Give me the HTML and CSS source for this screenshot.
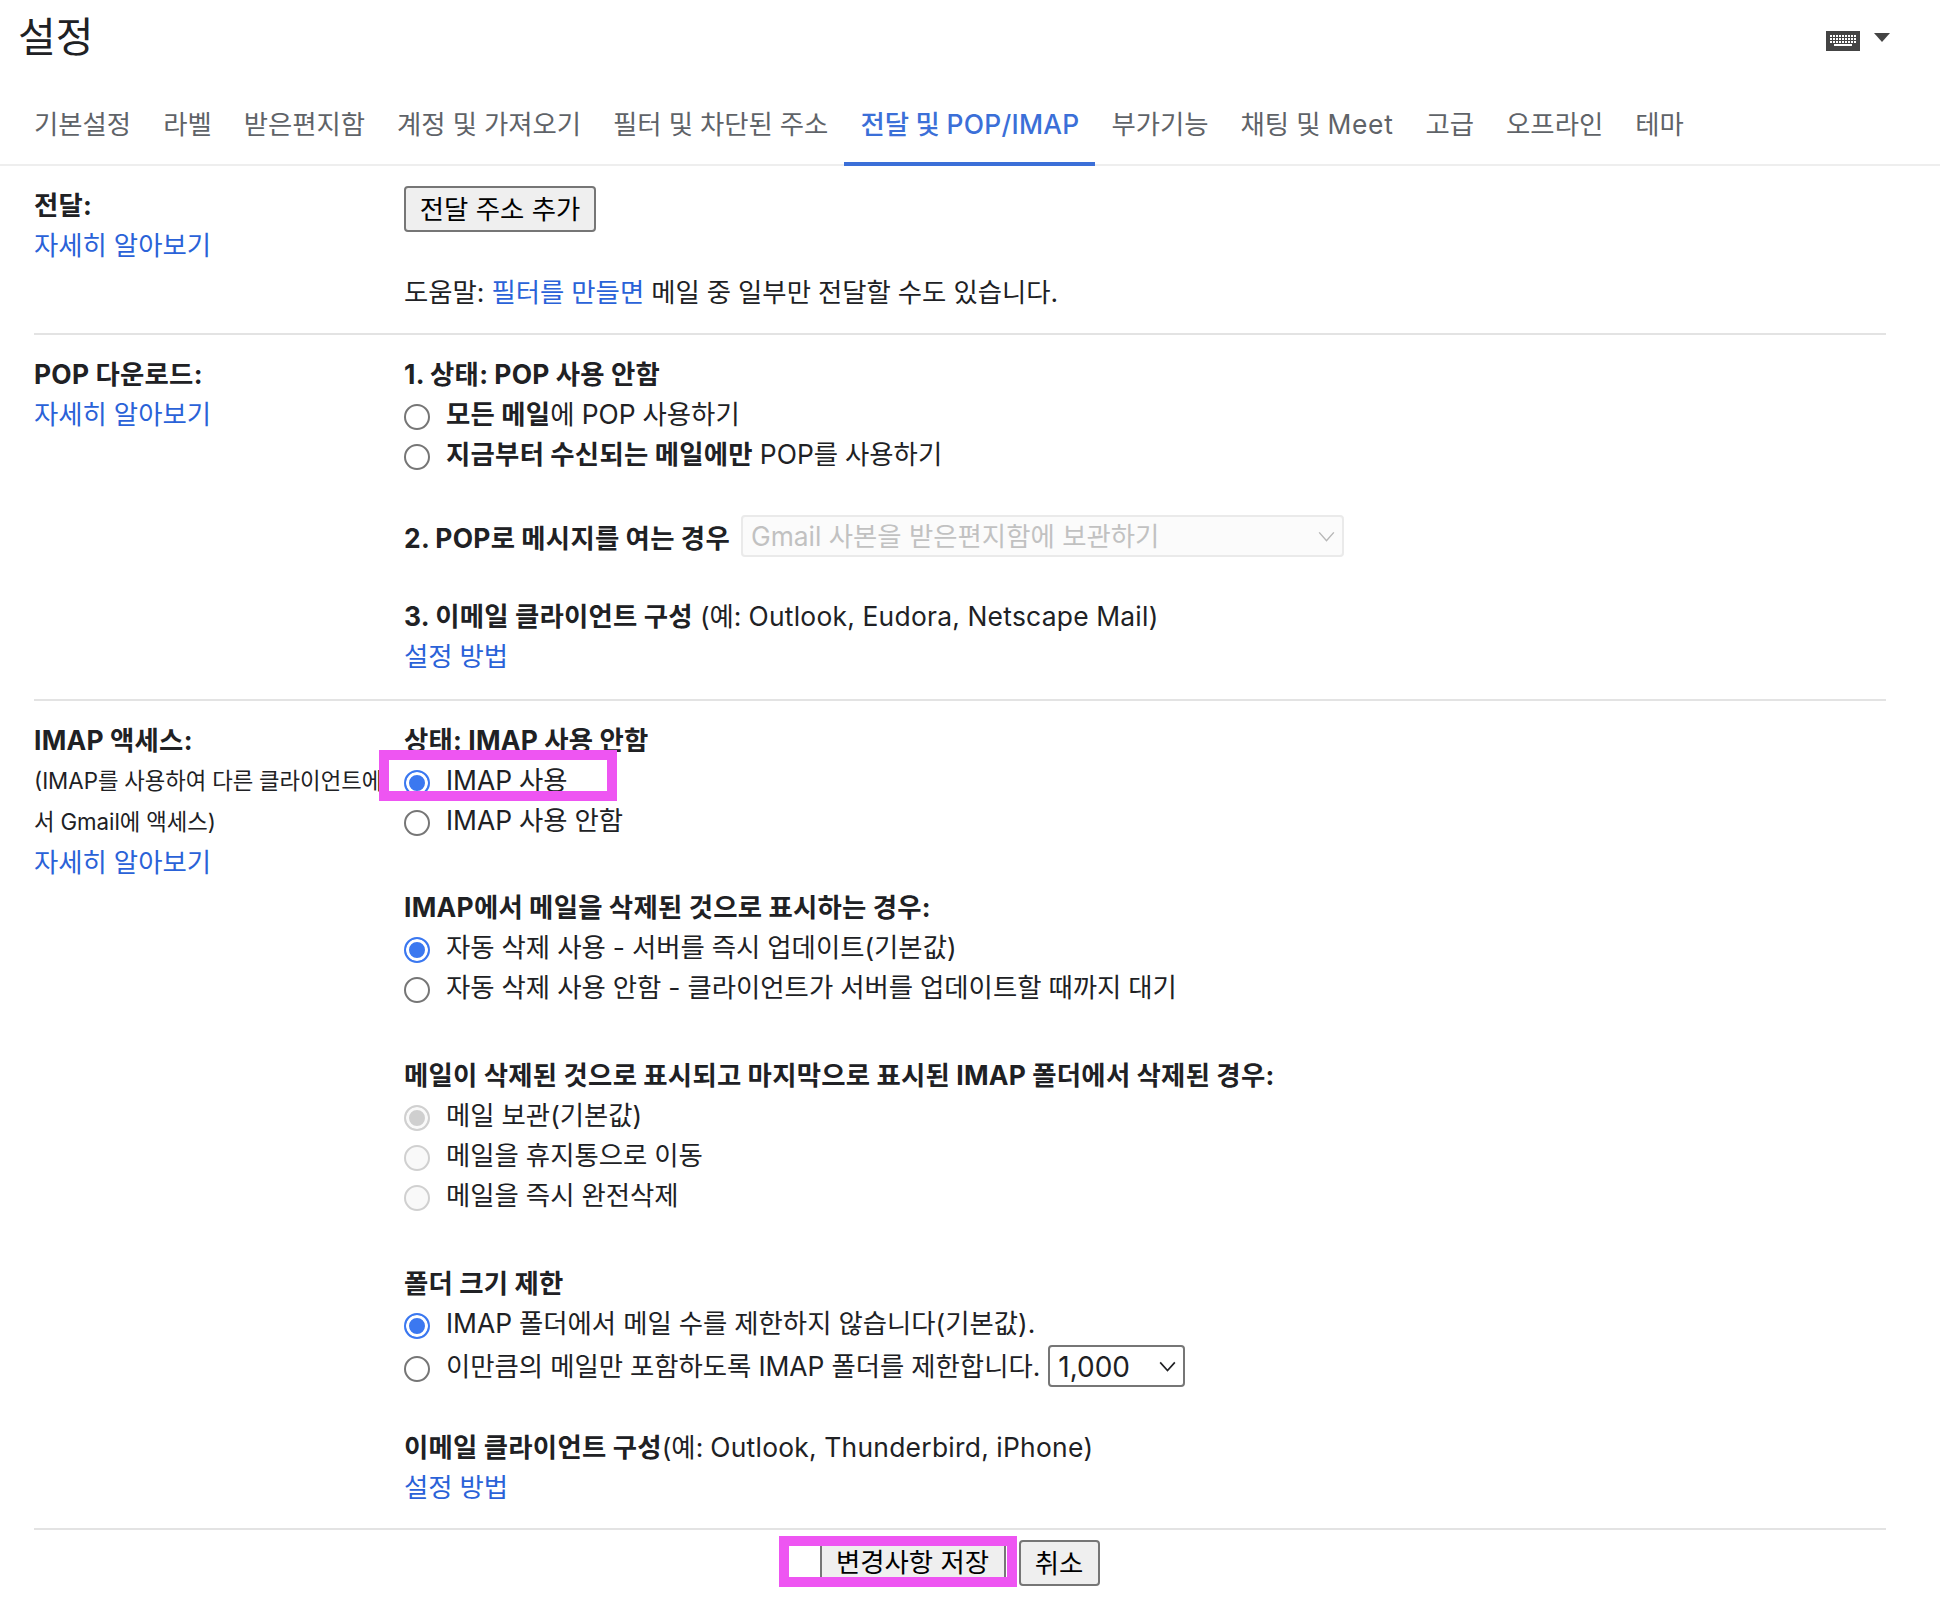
FILE: index.html
```html
<!DOCTYPE html>
<html lang="ko">
<head>
<meta charset="utf-8">
<title>설정</title>
<link rel="stylesheet" href="styles.css">
</head>
<body>
<header class="top">
  <h1 class="title">설정</h1>
  <div class="kbd">
    <svg class="kbd-icon" width="34" height="20" viewBox="0 0 34 20"><rect width="34" height="20" fill="#444"/><path d="M4 5h26M4 8h26M4 11h26" stroke="#fff" stroke-width="2" stroke-dasharray="2 1"/><rect x="8" y="13" width="18" height="2" fill="#fff"/></svg>
    <span class="kbd-arrow"></span>
  </div>
</header>
<nav class="tabs">
  <a class="tab">기본설정</a><a class="tab">라벨</a><a class="tab">받은편지함</a><a class="tab">계정 및 가져오기</a><a class="tab">필터 및 차단된 주소</a><a class="tab active">전달 및 <span class="lat">POP/IMAP</span></a><a class="tab">부가기능</a><a class="tab">채팅 및 <span class="lat-wide">Meet</span></a><a class="tab">고급</a><a class="tab">오프라인</a><a class="tab">테마</a>
</nav>
<main class="rows">
  <section class="row row-forward">
    <div class="label">
      <div class="line"><b>전달:</b></div>
      <div class="line"><a class="link">자세히 알아보기</a></div>
    </div>
    <div class="value">
      <button class="btn btn-add">전달 주소 추가</button>
      <div class="line">도움말: <a class="link">필터를 만들면</a> 메일 중 일부만 전달할 수도 있습니다.</div>
    </div>
  </section>
  <section class="row row-pop">
    <div class="label">
      <div class="line"><b>POP 다운로드:</b></div>
      <div class="line"><a class="link">자세히 알아보기</a></div>
    </div>
    <div class="value">
      <div class="group group-state">
        <div class="line"><b>1. 상태: POP 사용 안함</b></div>
        <label class="line opt"><input class="radio" type="radio" name="pop"><span><b>모든 메일</b>에 POP 사용하기</span></label>
        <label class="line opt"><input class="radio" type="radio" name="pop"><span><b>지금부터 수신되는 메일에만</b> POP를 사용하기</span></label>
      </div>
      <div class="group sel-line">
        <b>2. POP로 메시지를 여는 경우</b>
        <select class="select select-pop" disabled><option>Gmail 사본을 받은편지함에 보관하기</option></select>
      </div>
      <div class="group">
        <div class="line"><b>3. 이메일 클라이언트 구성</b> (예: <span class="lat">Outlook, Eudora, Netscape Mail</span>)</div>
        <div class="line"><a class="link">설정 방법</a></div>
      </div>
    </div>
  </section>
  <section class="row row-imap">
    <div class="label">
      <div class="line"><b>IMAP 액세스:</b></div>
      <div class="note">(IMAP를 사용하여 다른 클라이언트에<br>서 Gmail에 액세스)</div>
      <div class="line"><a class="link">자세히 알아보기</a></div>
    </div>
    <div class="value">
      <div class="group group-access">
        <div class="line"><b>상태: IMAP 사용 안함</b></div>
        <label class="line opt"><input class="radio" type="radio" name="imap" checked><span>IMAP 사용</span></label>
        <label class="line opt"><input class="radio" type="radio" name="imap"><span>IMAP 사용 안함</span></label>
        <div class="mark mark-imap"></div>
      </div>
      <div class="group group-delete">
        <div class="line"><b>IMAP에서 메일을 삭제된 것으로 표시하는 경우:</b></div>
        <label class="line opt"><input class="radio" type="radio" name="del" checked><span>자동 삭제 사용 - 서버를 즉시 업데이트(기본값)</span></label>
        <label class="line opt"><input class="radio" type="radio" name="del"><span>자동 삭제 사용 안함 - 클라이언트가 서버를 업데이트할 때까지 대기</span></label>
      </div>
      <div class="group group-expunge">
        <div class="line"><b>메일이 삭제된 것으로 표시되고 마지막으로 표시된 IMAP 폴더에서 삭제된 경우:</b></div>
        <label class="line opt"><input class="radio" type="radio" name="exp" checked disabled><span>메일 보관(기본값)</span></label>
        <label class="line opt"><input class="radio" type="radio" name="exp" disabled><span>메일을 휴지통으로 이동</span></label>
        <label class="line opt"><input class="radio" type="radio" name="exp" disabled><span>메일을 즉시 완전삭제</span></label>
      </div>
      <div class="group group-size">
        <div class="line"><b>폴더 크기 제한</b></div>
        <label class="line opt"><input class="radio" type="radio" name="lim" checked><span>IMAP 폴더에서 메일 수를 제한하지 않습니다(기본값).</span></label>
        <label class="line opt opt-sel"><input class="radio" type="radio" name="lim"><span>이만큼의 메일만 포함하도록 IMAP 폴더를 제한합니다.</span><select class="select select-num"><option>1,000</option></select></label>
      </div>
      <div class="group">
        <div class="line"><b>이메일 클라이언트 구성</b>(예: <span class="lat">Outlook, Thunderbird, iPhone</span>)</div>
        <div class="line"><a class="link">설정 방법</a></div>
      </div>
    </div>
  </section>
  <footer class="foot">
    <div class="mark-save">
      <span class="patch"></span>
      <button class="btn btn-save">변경사항 저장</button>
    </div>
    <button class="btn btn-cancel">취소</button>
  </footer>
</main>
</body>
</html>
```
FILE: styles.css
```css
html, body { margin: 0; padding: 0; background: #fff; }
body {
  width: 1940px;
  height: 1608px;
  overflow: hidden;
  font-family: "Inter", "Noto Sans CJK KR", sans-serif;
  font-size: 26.4px;
  word-spacing: -0.4px;
  color: #202124;
}
b { font-weight: 700; letter-spacing: 0.27px; }
.lat { letter-spacing: 0.27px; }
.lat-wide { letter-spacing: 0.7px; }
.top {
  height: 72px;
  display: flex;
  justify-content: space-between;
  align-items: flex-start;
}
.title {
  margin: 9px 0 0 18px;
  font-size: 41px;
  line-height: 56px;
  font-weight: 400;
}
.kbd { display: flex; margin: 31px 50px 0 0; gap: 14px; }
.kbd-icon { display: block; }
.kbd-arrow {
  width: 0; height: 0; margin-top: 2px;
  border-left: 8px solid transparent;
  border-right: 8px solid transparent;
  border-top: 9px solid #444;
}
.tabs {
  display: flex;
  height: 94px;
  box-sizing: border-box;
  padding-left: 18px;
  border-bottom: 2px solid #eee;
  color: #5f6368;
}
.tab {
  padding: 0 16px;
  height: 92px;
  box-sizing: border-box;
  line-height: 104px;
  white-space: nowrap;
}
.tab.active {
  height: 94px;
  color: #3b6fd8;
  font-weight: 500;
  border-bottom: 4px solid #3b6fd8;
}
.rows { margin: 0 54px 0 34px; }
.row {
  display: flex;
  border-bottom: 2px solid #e3e3e3;
}
.row-forward { padding: 19px 0 21px; }
.row-pop { padding: 19px 0 23px; }
.row-imap { padding: 19px 0 21px; }
.label { width: 370px; flex: none; }
.value { flex: 1; min-width: 0; }
.line { line-height: 40px; height: 40px; white-space: nowrap; }
.link { color: #2a62d8; }
.note { font-size: 22.3px; line-height: 41px; white-space: nowrap; }
.group { position: relative; }
.group-state { margin-bottom: 42px; }
.sel-line { margin-bottom: 40px; }
.group-access { margin-bottom: 47px; }
.group-delete { margin-bottom: 48px; }
.group-expunge { margin-bottom: 48px; }
.group-size { margin-bottom: 38px; }
.opt { display: flex; align-items: center; }
.opt-sel { height: 46px; }
.radio {
  appearance: none;
  box-sizing: border-box;
  width: 26px; height: 26px;
  margin: 6px 16px 0 0;
  flex: none;
  border: 2.5px solid #767676;
  border-radius: 50%;
  background: #fff;
}
.radio:checked {
  border-color: #3b78f0;
  background: #3b78f0;
  box-shadow: inset 0 0 0 3px #fff;
}
.radio:disabled {
  border-color: #d0d0d0;
  background: #f9f9f9;
}
.radio:disabled:checked {
  background: #cfcfcf;
  box-shadow: inset 0 0 0 3px #f9f9f9;
}
.sel-line { display: flex; align-items: center; gap: 11px; height: 40px; white-space: nowrap; }
.select {
  appearance: none;
  font: inherit;
  color: inherit;
  background-repeat: no-repeat;
  background-position: right 7px center;
  background-size: 17px 11px;
  border-radius: 4px;
  box-sizing: border-box;
  padding: 0 0 0 8px;
}
.select-pop {
  flex: none;
  width: 603px; height: 42px;
  color: #a8a8a8;
  background-color: #fafafa;
  background-image: url("data:image/svg+xml,%3Csvg xmlns='http://www.w3.org/2000/svg' viewBox='0 0 18 12'%3E%3Cpath d='M1 1.5l8 9 8-9' fill='none' stroke='%23999' stroke-width='1.6'/%3E%3C/svg%3E");
  border: 2px solid #e2e2e2;
}
.select-num {
  flex: none;
  width: 137px; height: 42px;
  margin-left: 8px;
  font-size: 28px;
  background-color: #fff;
  background-image: url("data:image/svg+xml,%3Csvg xmlns='http://www.w3.org/2000/svg' viewBox='0 0 18 12'%3E%3Cpath d='M1 1.5l8 9 8-9' fill='none' stroke='%23202124' stroke-width='1.8'/%3E%3C/svg%3E");
  border: 2px solid #767676;
}
.btn {
  font: inherit;
  color: #000;
  background: #efefef;
  border: 2px solid #767676;
  border-radius: 4px;
  padding: 0 0 3px;
  height: 46px;
  box-sizing: border-box;
}
.btn-add { width: 192px; display: block; margin: 1px 0 40px; }
.mark {
  position: absolute;
  box-sizing: border-box;
  border: 10px solid #ee55f2;
  pointer-events: none;
}
.mark-imap { left: -25px; top: 30px; width: 238px; height: 51px; }
.foot {
  display: flex;
  justify-content: center;
  align-items: flex-start;
  gap: 2px;
  padding: 6px 42px 0 0;
}
.mark-save {
  box-sizing: border-box;
  width: 238px; height: 51px;
  border: 10px solid #ee55f2;
  display: flex;
  overflow: hidden;
  background: #fff;
  align-items: center;
}
.patch { width: 31px; flex: none; }
.btn-save { width: 186px; height: 46px; flex: none; }
.btn-cancel { width: 81px; margin-top: 4px; }
```
